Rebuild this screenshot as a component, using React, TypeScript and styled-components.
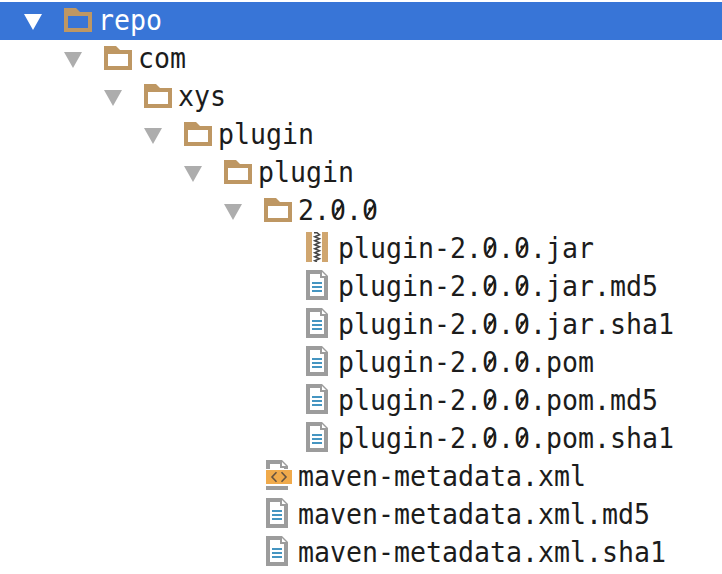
import React from 'react';
import styled, { createGlobalStyle } from 'styled-components';

const GlobalStyle = createGlobalStyle`
  body {
    margin: 0;
    background: #ffffff;
    overflow: hidden;
  }
`;

const Tree = styled.div`
  box-sizing: border-box;
  height: 574px;
  padding-top: 2px;
  overflow: hidden;
  background: #ffffff;
`;

const Row = styled.div<{ $depth: number; $selected?: boolean }>`
  box-sizing: border-box;
  display: flex;
  align-items: flex-start;
  height: 38px;
  padding-left: ${(p) => 24 + p.$depth * 40}px;
  background: ${(p) => (p.$selected ? '#3875d7' : 'transparent')};
  color: ${(p) => (p.$selected ? '#ffffff' : '#1c1c1c')};
`;

const CaretSlot = styled.span<{ $selected?: boolean }>`
  display: flex;
  flex: 0 0 40px;
  padding-top: 12px;
  color: ${(p) => (p.$selected ? '#ffffff' : '#adadad')};
`;

const IconSlot = styled.span<{ $file: boolean }>`
  box-sizing: border-box;
  display: flex;
  flex: 0 0 34px;
  padding: ${(p) => (p.$file ? '2px 0 0 2px' : '6px 0 0')};
`;

const Label = styled.span`
  font-family: 'DejaVu Sans Mono', 'Liberation Mono', monospace;
  font-size: 26.58px;
  line-height: 38px;
  white-space: pre;
  transform: scaleY(1.07);
  transform-origin: 0 28px;
`;

/* A zero with a diagonal stroke laid over its bowl. */
const SlashedZero = styled.span`
  position: relative;

  &::after {
    content: '';
    position: absolute;
    left: 50%;
    top: 50%;
    width: 15px;
    height: 2px;
    margin: -0.5px 0 0 -7.5px;
    background: currentColor;
    transform: rotate(-55deg);
  }
`;

const Caret = () => (
  <svg width="18" height="16" viewBox="0 0 18 16">
    <path d="M0 0H18L9 16Z" fill="currentColor" />
  </svg>
);

const FolderIcon = () => (
  <svg width="28" height="24" viewBox="0 0 28 24">
    <path
      fillRule="evenodd"
      d="M0 0H12L16 4H28V24H0ZM4 8V20H24V8Z"
      fill="#be9763"
    />
  </svg>
);

const PageOutline = () => (
  <>
    <path d="M0 0H16L22 6V30H0Z" fill="#9c9c9c" />
    <path d="M4 4H14V8H18V26H4Z" fill="#ffffff" />
    <path d="M16 2V6H20Z" fill="#ffffff" />
  </>
);

const TextFileIcon = () => (
  <svg width="22" height="30" viewBox="0 0 22 30">
    <PageOutline />
    <path d="M6 13H16M6 17H16M6 21H16" stroke="#4595c1" strokeWidth="2" />
  </svg>
);

const XmlFileIcon = () => (
  <svg width="26" height="30" viewBox="0 0 26 30">
    <PageOutline />
    <path d="M0 9H22V26H0Z" fill="#ffffff" />
    <path d="M0 10H26V24H0Z" fill="#f0aa4b" />
    <path
      d="M10.5 12.3L6 17L10.5 21.7M15.5 12.3L20 17L15.5 21.7"
      fill="none"
      stroke="#655341"
      strokeWidth="1.6"
    />
  </svg>
);

const JarIcon = () => (
  <svg width="22" height="30" viewBox="0 0 22 30">
    <path d="M0 0H6V30H0ZM16 0H22V30H16Z" fill="#d0a66f" />
    <path
      d="M8 .7H11L13.5 2.7L8.7 4.7L13.5 6.7L8.7 8.7L13.5 10.7L8.7 12.7L13.5 14.7L8.7 16.7L13.5 18.7L8.7 20.7L13.5 22.7L8.7 24.7L13.5 26.7L8.7 28.7L11 29.7"
      fill="none"
      stroke="#454545"
      strokeWidth="1.5"
    />
  </svg>
);

type Kind = 'folder' | 'jar' | 'text' | 'xml';

const icons: Record<Kind, React.FC> = {
  folder: FolderIcon,
  jar: JarIcon,
  text: TextFileIcon,
  xml: XmlFileIcon,
};

const entries: { name: string; depth: number; kind: Kind }[] = [
  { name: 'repo', depth: 0, kind: 'folder' },
  { name: 'com', depth: 1, kind: 'folder' },
  { name: 'xys', depth: 2, kind: 'folder' },
  { name: 'plugin', depth: 3, kind: 'folder' },
  { name: 'plugin', depth: 4, kind: 'folder' },
  { name: '2.0.0', depth: 5, kind: 'folder' },
  { name: 'plugin-2.0.0.jar', depth: 6, kind: 'jar' },
  { name: 'plugin-2.0.0.jar.md5', depth: 6, kind: 'text' },
  { name: 'plugin-2.0.0.jar.sha1', depth: 6, kind: 'text' },
  { name: 'plugin-2.0.0.pom', depth: 6, kind: 'text' },
  { name: 'plugin-2.0.0.pom.md5', depth: 6, kind: 'text' },
  { name: 'plugin-2.0.0.pom.sha1', depth: 6, kind: 'text' },
  { name: 'maven-metadata.xml', depth: 5, kind: 'xml' },
  { name: 'maven-metadata.xml.md5', depth: 5, kind: 'text' },
  { name: 'maven-metadata.xml.sha1', depth: 5, kind: 'text' },
];

const FileName = ({ name }: { name: string }) => (
  <Label>
    {name
      .split(/(0)/)
      .map((part, i) => (part === '0' ? <SlashedZero key={i}>0</SlashedZero> : part))}
  </Label>
);

export default function App() {
  return (
    <>
      <GlobalStyle />
      <Tree role="tree">
        {entries.map(({ name, depth, kind }, i) => {
          const Icon = icons[kind];
          const selected = i === 0;
          return (
            <Row key={i} role="treeitem" $depth={depth} $selected={selected}>
              <CaretSlot $selected={selected}>{kind === 'folder' && <Caret />}</CaretSlot>
              <IconSlot $file={kind !== 'folder'}>
                <Icon />
              </IconSlot>
              <FileName name={name} />
            </Row>
          );
        })}
      </Tree>
    </>
  );
}
